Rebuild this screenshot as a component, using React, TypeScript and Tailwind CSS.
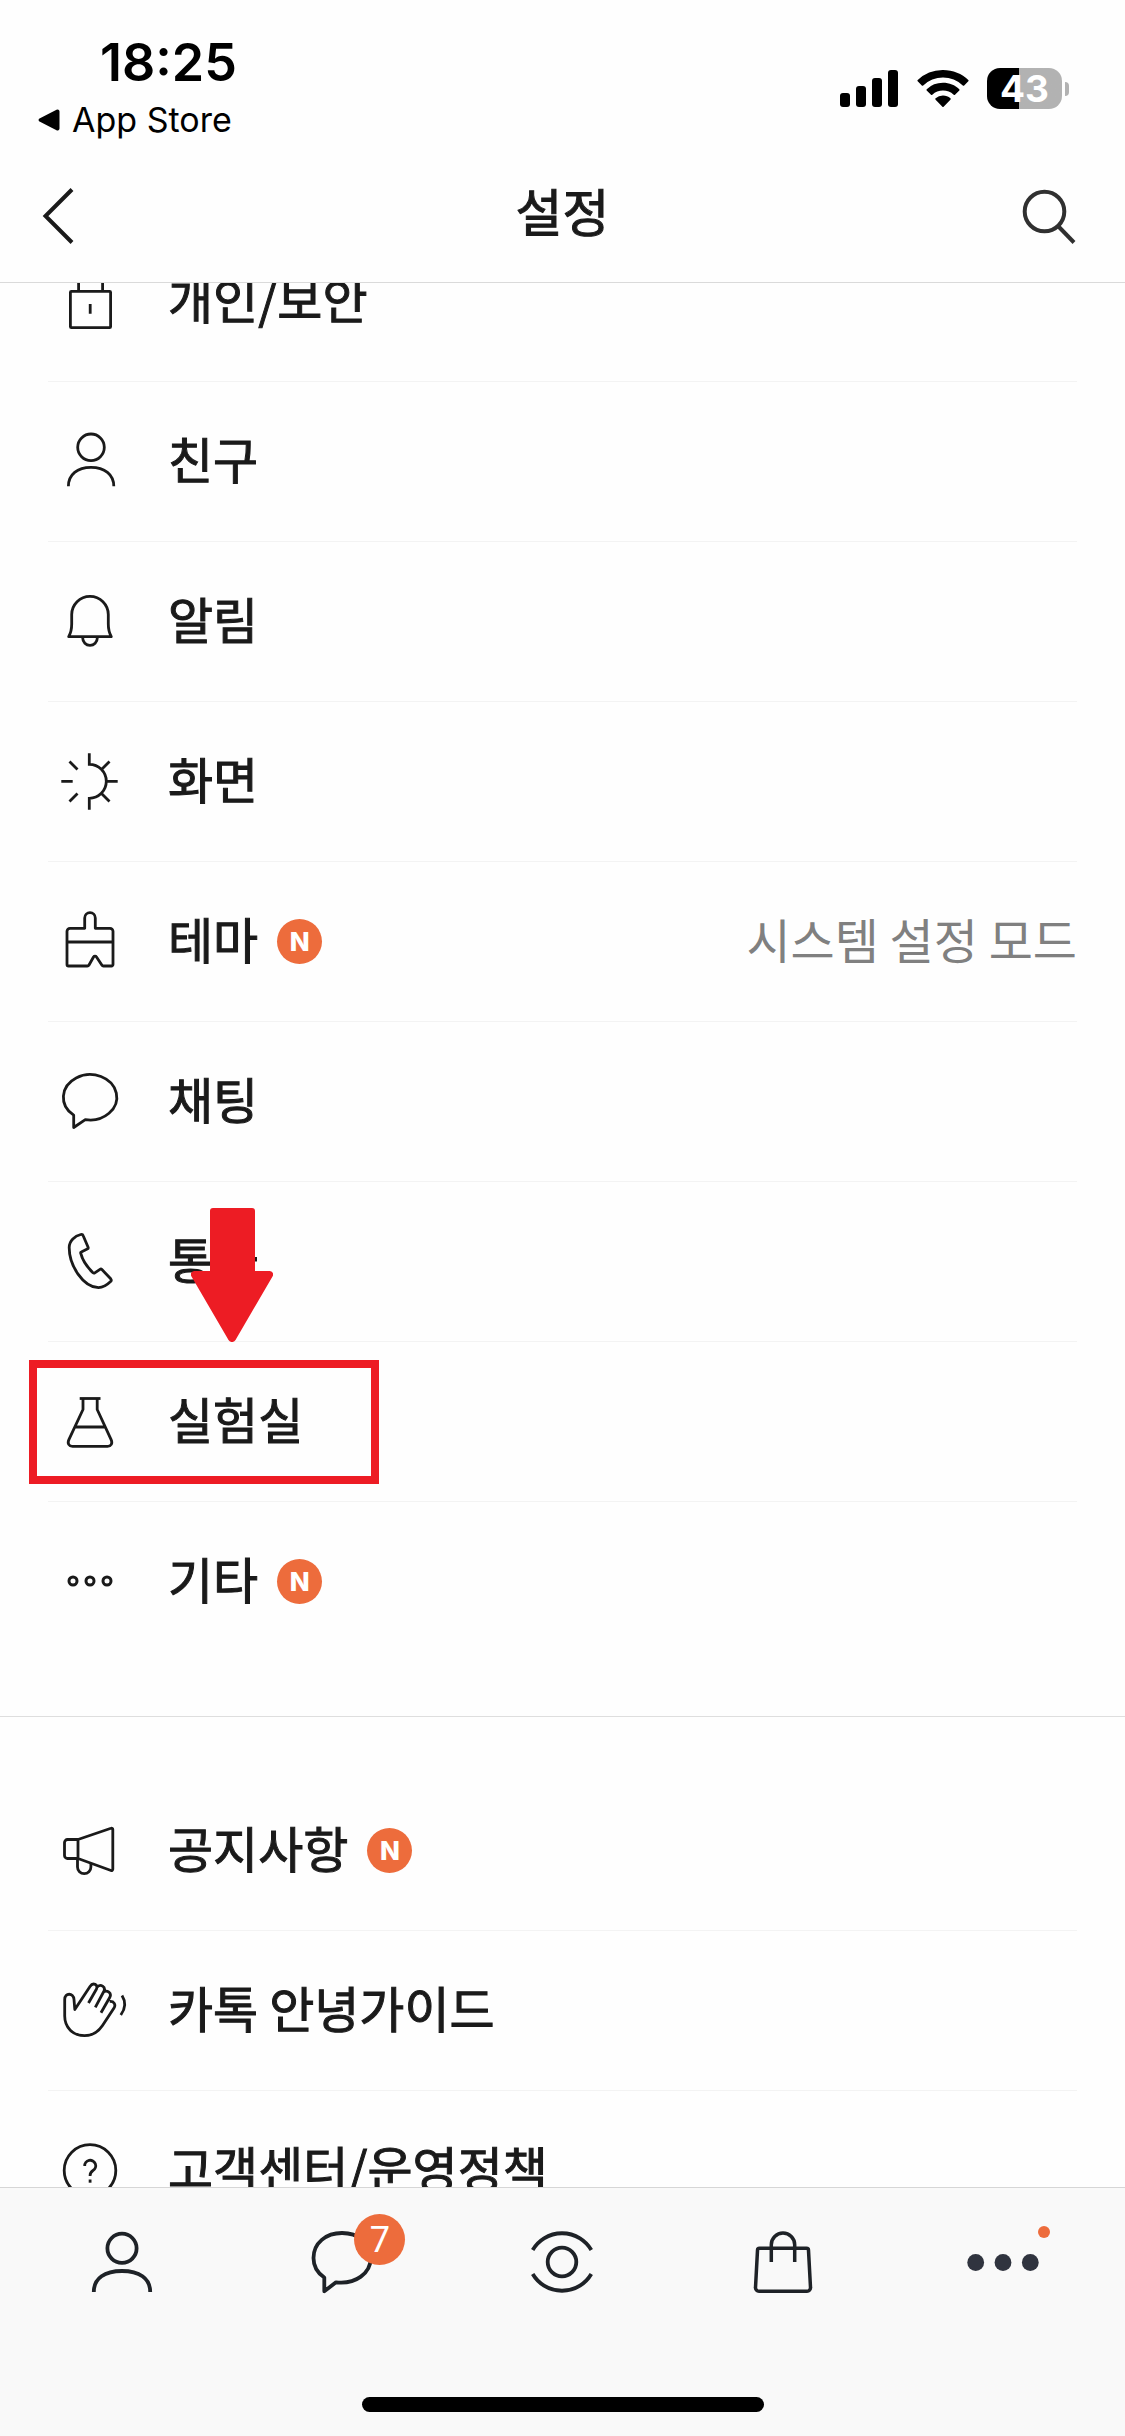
import type { ReactNode } from "react";

const KR = "font-['Noto_Sans_CJK_KR','Noto_Sans',sans-serif]";

function RowIcon({ children }: { children: ReactNode }) {
  return (
    <svg
      viewBox="0 0 60 61"
      className="h-[61px] w-[60px] shrink-0 overflow-visible"
      fill="none"
      stroke="#1a1a1a"
      strokeWidth="2.8"
      strokeLinejoin="round"
      aria-hidden="true"
    >
      {children}
    </svg>
  );
}

function TabIcon({ children }: { children: ReactNode }) {
  return (
    <svg
      viewBox="0 0 68 68"
      className="size-[68px] overflow-visible"
      fill="none"
      stroke="#1e2227"
      strokeWidth="3.8"
      strokeLinejoin="round"
      aria-hidden="true"
    >
      {children}
    </svg>
  );
}

type Item = {
  label: string;
  icon: ReactNode;
  isNew?: boolean;
  value?: string;
  highlighted?: boolean;
};

const mainItems: Item[] = [
  {
    label: "개인/보안",
    icon: (
      <>
        <rect x="10.4" y="20.3" width="40.2" height="36.4" rx="1" />
        <path d="M18.6 20V12a12 12 0 0 1 24 0v8M30.2 33v9.7" />
      </>
    ),
  },
  {
    label: "친구",
    icon: (
      <>
        <circle cx="31" cy="16.3" r="13.3" />
        <path d="M8.4 55.3C8.4 43.5 17.5 36.3 31 36.3S53.8 43.5 53.8 55.3" />
      </>
    ),
  },
  {
    label: "알림",
    icon: (
      <>
        <path d="M11.7 33V23.6a18.3 18.3 0 0 1 36.6 0V33c0 5 1.2 9.5 3 12.7H8.7c1.8-3.2 3-7.7 3-12.7z" />
        <path d="M22.7 45.7V47a7.3 7.3 0 0 0 14.6 0v-1.3" />
      </>
    ),
  },
  {
    label: "화면",
    icon: (
      <path
        strokeLinejoin="miter"
        d="M29.3 2.3v11a17 17 0 0 1 0 34v11.4M46.3 30.3h11.4M1.3 30.3h11.4M41.5 18.5l8-8M41.5 42.5l8 8M9.500 10.500l8 8M17.500 42.500l-8 8"
      />
    ),
  },
  {
    label: "테마",
    isNew: true,
    value: "시스템 설정 모드",
    icon: (
      <path d="M24.7 17.3V7a5.3 5.3 0 0 1 10.6 0v10.3H50a3 3 0 0 1 3 3V53.5a1.5 1.5 0 0 1-1.5 1.5H43.5a2 2 0 0 1-1.7-.9L36.5 46a1.8 1.8 0 0 0-3 0L29 54a2 2 0 0 1-1.7 1H8.5A1.5 1.5 0 0 1 7 53.5V20.3a3 3 0 0 1 3-3zM7 31H53" />
    ),
  },
  {
    label: "채팅",
    icon: <path d="M25.300 48.600A26.700 22.700 0 1 0 13.700 44.200V56.500z" />,
  },
  {
    label: "통화",
    icon: (
      <path d="M20.8 3.5a2 2 0 0 1 2.4 1.3L28 16a1.6 1.6 0 0 1-.8 2.1L21.3 21a1 1 0 0 0-.6 1.2C22.5 29.5 26.5 35.5 33 41.8a1.5 1.5 0 0 0 1.8.1L40 38.3a1.5 1.5 0 0 1 1.9.2L50.7 47.8a2 2 0 0 1-.1 2.7C47.5 53.5 43 56.5 38.5 56.7 23 56 9.2 34.5 9.2 16.5 9.2 9.5 15 5 20.8 3.5z" />
    ),
  },
  {
    label: "실험실",
    highlighted: true,
    icon: (
      <>
        <path d="M23 7.5V18.5L9 48.3C7 52.5 9 55.3 12.5 55.3h35c3.5 0 5.5-2.8 3.5-7L37.2 18.5V7.5M15.3 36h29.5" />
        <path d="M19.7 7.5h20.8" />
      </>
    ),
  },
  {
    label: "기타",
    isNew: true,
    icon: (
      <g strokeWidth="3">
        <circle cx="13" cy="30" r="4" />
        <circle cx="30" cy="30" r="4" />
        <circle cx="47" cy="30" r="4" />
      </g>
    ),
  },
];

const infoItems: Item[] = [
  {
    label: "공지사항",
    isNew: true,
    icon: (
      <>
        <path d="M18 19.5H7.5a3 3 0 0 0-3 3v13a3 3 0 0 0 3 3H18zM18 19.5 51 8.2a1.3 1.3 0 0 1 1.8 1.3V49.2a1.3 1.3 0 0 1-1.8 1.3L18 38.5" />
        <path d="M17.5 38.5V47a6.7 6.7 0 0 0 13.4 0V43.5" />
      </>
    ),
  },
  {
    label: "카톡 안녕가이드",
    icon: (
      <>
        <path d="M4.700 36V19.500C4.700 12.500 13.500 12.500 14 19.500L14.800 29.500 30 6.500c3-4.500 8.500-2 6.500 2.500L28.500 23" />
        <path d="M36.500 7.500c4-4.500 10-.5 7 4.500L35.300 27.300M43.200 12c4-2.500 9 1 6.500 5.500L41 32.700M49.700 21.500c4-.5 6.500 3 4.300 6.500L42.500 45.500C37.500 53 32 55.700 24.500 55.700 13 55.700 4.700 47.500 4.700 36" />
        <path d="M62 15.500c3.800 6 3.500 13-1.200 19.500" />
      </>
    ),
  },
  {
    label: "고객센터/운영정책",
    icon: (
      <>
        <circle cx="30" cy="30.5" r="25.8" />
        <path d="M24.7 26a5.5 5.5 0 1 1 8.3 4.5c-2 1.3-2.9 2.5-2.9 5v.5" />
        <path d="M30.1 39.5v3.2" />
      </>
    ),
  },
];

function SettingRow({ item, last }: { item: Item; last?: boolean }) {
  return (
    <li className={`relative h-40 border-b ${last ? "border-transparent" : "border-[#f3f3f3]"}`}>
      <button type="button" className="flex h-full w-full items-center pl-3 text-left">
        <RowIcon>{item.icon}</RowIcon>
        <span className="ml-12 pb-2 text-[49px] leading-[56px] whitespace-nowrap text-[#1a1a1a] [-webkit-text-stroke:1px]">
          {item.label}
        </span>
        {item.isNew && (
          <span className="ml-[19px] flex size-[45px] shrink-0 items-center justify-center rounded-full bg-[#ed6c3c] font-['Inter',sans-serif] text-[26px] leading-none font-extrabold text-white">
            N
          </span>
        )}
        {item.value && (
          <span className="ml-auto pb-2 text-[48px] leading-[56px] whitespace-nowrap text-[#808080]">{item.value}</span>
        )}
      </button>
      {item.highlighted && (
        <>
          <div className="pointer-events-none absolute top-[18px] -left-[19px] h-[124px] w-[350px] border-8 border-[#ed1c24]" />
          <svg
            viewBox="0 0 82 134"
            className="pointer-events-none absolute -top-[134px] left-[143px] h-[134px] w-[82px]"
            fill="#ed1c24"
            aria-hidden="true"
          >
            <path d="M22 0H61a3 3 0 0 1 3 3V63H78.500a3.500 3.500 0 0 1 3 5.500L44.500 132a4 4 0 0 1-7 0L.5 68.500A3.500 3.500 0 0 1 3.500 63H19V3a3 3 0 0 1 3-3z" />
          </svg>
        </>
      )}
    </li>
  );
}

function StatusBar() {
  return (
    <div className="flex h-[150px] items-start justify-between pr-14 pl-[38px] font-['Inter',sans-serif] text-black">
      <div className="pt-9">
        <div className="pl-[62px] text-[52px] leading-[54px] font-semibold">18:25</div>
        <a href="#app-store" className="mt-[10px] flex items-center gap-3 text-[34px] leading-[40px]">
          <svg viewBox="0 0 22 22" className="size-[22px]" aria-hidden="true">
            <path d="M1.500 9.500 18.500.8A2 2 0 0 1 21.500 2.500V19.500a2 2 0 0 1-3 1.700L1.500 12.500a1.700 1.700 0 0 1 0-3z" />
          </svg>
          App Store
        </a>
      </div>
      <div className="flex items-center pt-[68px]">
        <svg viewBox="0 0 58 37" className="h-[37px] w-[58px]" aria-label="신호 세기">
          <rect y="23" width="10" height="14" rx="3" />
          <rect x="16" y="16" width="10" height="21" rx="3" />
          <rect x="32" y="8" width="10" height="29" rx="3" />
          <rect x="48" width="10" height="37" rx="3" />
        </svg>
        <svg viewBox="0 0 52 37" className="ml-[19px] h-[37px] w-[52px]" aria-label="와이파이">
          <path d="M26 0C36 0 45 3.800 51.300 10a1 1 0 0 1 0 1.300L47.200 15.500a1 1 0 0 1-1.400 0A28.500 28.500 0 0 0 6.200 15.500a1 1 0 0 1-1.400 0L.7 11.300a1 1 0 0 1 0-1.300A36.500 36.500 0 0 1 26 0z" />
          <path d="M26 12.800c6.300 0 12 2.300 16.300 6.400a1 1 0 0 1 0 1.300L38 24.700a1 1 0 0 1-1.300 0 15.800 15.800 0 0 0-21.400 0 1 1 0 0 1-1.300 0L9.700 20.500a1 1 0 0 1 0-1.300A23.700 23.700 0 0 1 26 12.800z" />
          <path d="M26 25.500c2.800 0 5.400 1 7.400 2.800a1 1 0 0 1 0 1.400L26.600 36.700a.8.8 0 0 1-1.200 0L18.600 29.700a1 1 0 0 1 0-1.400A11 11 0 0 1 26 25.500z" />
        </svg>
        <div className="ml-[18px] flex h-[41px] w-[75px] items-center justify-center rounded-[13px] bg-linear-to-r from-black from-43% to-[#b2b2b2] to-43% text-[37px] leading-none font-bold text-white">
          43
        </div>
        <div className="ml-[3px] h-[14px] w-1 rounded-r-full bg-[#b2b2b2]" />
      </div>
    </div>
  );
}

const tabs: { name: string; icon: ReactNode; count?: string; dot?: boolean }[] = [
  {
    name: "친구",
    icon: (
      <>
        <circle cx="34" cy="20.3" r="14.6" />
        <path d="M5.8 64C5.8 50 17 43 34 43S62.2 50 62.2 64" />
      </>
    ),
  },
  {
    name: "채팅",
    count: "7",
    icon: <path d="M28 54.3C48 56.5 62.7 45 62.7 30 62.7 15 50 5 34 5S5.5 15 5.5 30C5.5 38.5 9.5 45 16.3 49.5V63.3z" />,
  },
  {
    name: "오픈채팅",
    icon: (
      <>
        <path d="M4.7 22a34 34 0 0 1 58.6 0M4.7 46a34 34 0 0 0 58.6 0" />
        <circle cx="34" cy="34" r="14.3" />
      </>
    ),
  },
  {
    name: "쇼핑",
    icon: (
      <g strokeWidth="3.5">
        <path d="M10.5 20.3H57.5a2 2 0 0 1 2 2L61.5 59.5a3.5 3.5 0 0 1-3.5 3.8H10a3.5 3.5 0 0 1-3.5-3.8L8.5 22.3a2 2 0 0 1 2-2z" />
        <path d="M22.3 34V16.7a11.7 11.7 0 0 1 23.4 0V34" />
      </g>
    ),
  },
  {
    name: "더보기",
    dot: true,
    icon: (
      <g fill="#30343f" stroke="none">
        <circle cx="6.7" cy="34.5" r="8.4" />
        <circle cx="34" cy="34.5" r="8.4" />
        <circle cx="61.3" cy="34.5" r="8.4" />
      </g>
    ),
  },
];

export default function App() {
  return (
    <div className={`flex h-screen flex-col overflow-hidden bg-[#fefefe] ${KR}`}>
      <header className="shrink-0 border-b border-[#dadada]">
        <StatusBar />
        <div className="grid h-[132px] grid-cols-[1fr_auto_1fr] items-center pr-10 pl-10">
          <button type="button" aria-label="뒤로" className="justify-self-start">
            <svg viewBox="0 0 36 60" className="h-[60px] w-9" fill="none" stroke="#1a1a1a" strokeWidth="4" aria-hidden="true">
              <path d="M32 3.500 5.500 30 32 56.500" />
            </svg>
          </button>
          <h1 className="pb-3 text-[51px] leading-[56px] text-[#1a1a1a] [-webkit-text-stroke:1px]">설정</h1>
          <button type="button" aria-label="검색" className="justify-self-end pr-[7px]">
            <svg viewBox="0 0 60 60" className="size-[60px]" fill="none" stroke="#303030" strokeWidth="4" aria-hidden="true">
              <circle cx="26.500" cy="25.500" r="19.800" />
              <path d="M40.500 40.500 56 56.500" />
            </svg>
          </button>
        </div>
      </header>

      <main className="min-h-0 flex-1 overflow-hidden">
        <ul className="mx-12 -mt-[61px]">
          {mainItems.map((item, i) => (
            <SettingRow key={item.label} item={item} last={i === mainItems.length - 1} />
          ))}
        </ul>
        <ul className="mt-[54px] border-t border-[#dedede] px-12 pt-[54px]">
          {infoItems.map((item) => (
            <SettingRow key={item.label} item={item} />
          ))}
        </ul>
      </main>

      <nav className="shrink-0 border-t border-[#d6d6d6] bg-[#f9f9f9] px-3 pt-10 pb-6">
        <div className="grid grid-cols-5 justify-items-center">
          {tabs.map((tab) => (
            <button key={tab.name} type="button" aria-label={tab.name} className="relative">
              <TabIcon>{tab.icon}</TabIcon>
              {tab.count && (
                <span className="absolute -top-[14px] left-[46px] flex size-[51px] items-center justify-center rounded-full bg-[#ed6c3c] font-['Roboto',sans-serif] text-[36px] leading-none font-normal text-white">
                  {tab.count}
                </span>
              )}
              {tab.dot && <span className="absolute -top-[2px] left-[69px] size-3 rounded-full bg-[#ed6c3c]" />}
            </button>
          ))}
        </div>
        <div className="mx-auto mt-[101px] h-[15px] w-[402px] rounded-full bg-black" />
      </nav>
    </div>
  );
}
